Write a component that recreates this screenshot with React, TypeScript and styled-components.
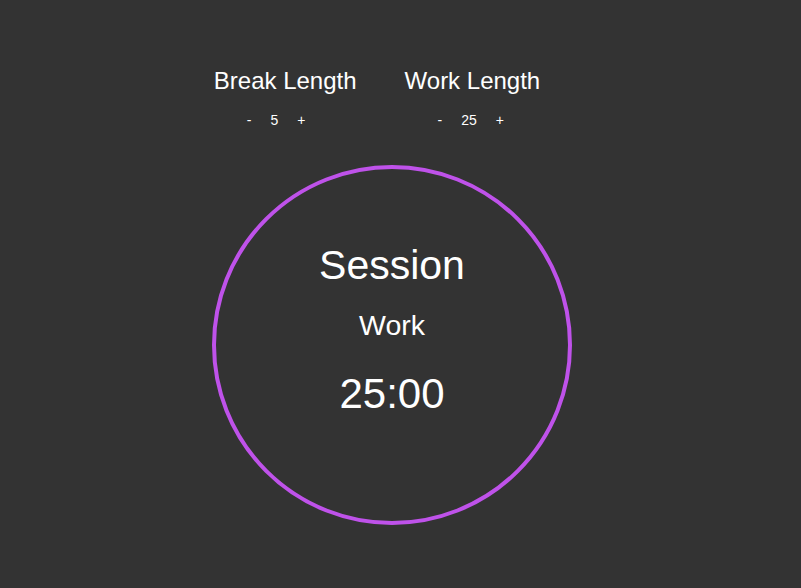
import React, { useState } from "react";
import styled, { createGlobalStyle } from "styled-components";

const GlobalStyle = createGlobalStyle`
  html, body {
    margin: 0;
    padding: 0;
    background: #333333;
    color: #fff;
    font-family: "Liberation Sans", Arial, sans-serif;
  }
`;

const Page = styled.div`
  width: 801px;
  height: 588px;
  display: flex;
  flex-direction: column;
  align-items: center;
  padding-top: 65px;
  box-sizing: border-box;
`;

const Settings = styled.div`
  display: flex;
  gap: 48px;
  padding-right: 47px;
`;

const Setting = styled.div`
  display: flex;
  flex-direction: column;
  align-items: flex-start;
`;

const Title = styled.div`
  font-size: 24px;
  line-height: 32px;
`;

const Controls = styled.div`
  display: flex;
  align-items: center;
  gap: 19px;
  margin: 15px 0 0 33px;
  font-size: 14px;
`;

const Btn = styled.button`
  background: none;
  border: none;
  padding: 0;
  color: #fff;
  font: inherit;
  cursor: pointer;
`;

const Dial = styled.div`
  margin-top: 37px;
  margin-left: -17px;
  width: 360px;
  height: 360px;
  box-sizing: border-box;
  border: 4px solid #bf52ea;
  border-radius: 50%;
  display: flex;
  flex-direction: column;
  align-items: center;
  padding-top: 73px;
`;

const Label = styled.div<{ $size: number; $gap?: number }>`
  font-size: ${(p) => p.$size}px;
  line-height: 1.15;
  margin-top: ${(p) => p.$gap ?? 0}px;
`;

export default function App() {
  const [brk, setBrk] = useState(5);
  const [work, setWork] = useState(25);

  return (
    <>
      <GlobalStyle />
      <Page>
        <Settings>
          <Setting>
            <Title>Break Length</Title>
            <Controls>
              <Btn onClick={() => setBrk(Math.max(1, brk - 1))}>-</Btn>
              <span>{brk}</span>
              <Btn onClick={() => setBrk(brk + 1)}>+</Btn>
            </Controls>
          </Setting>
          <Setting>
            <Title>Work Length</Title>
            <Controls>
              <Btn onClick={() => setWork(Math.max(1, work - 1))}>-</Btn>
              <span>{work}</span>
              <Btn onClick={() => setWork(work + 1)}>+</Btn>
            </Controls>
          </Setting>
        </Settings>
        <Dial>
          <Label $size={41}>Session</Label>
          <Label $size={28.5} $gap={20}>Work</Label>
          <Label $size={42} $gap={28}>{`${String(work).padStart(2, "0")}:00`}</Label>
        </Dial>
      </Page>
    </>
  );
}
